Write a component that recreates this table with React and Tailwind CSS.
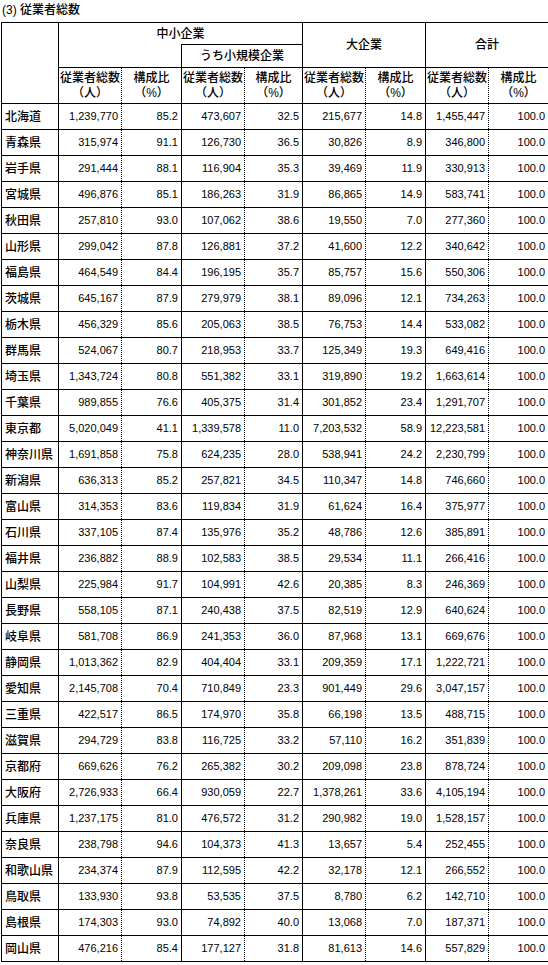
const rows = [
  ['北海道', '1,239,770', '85.2', '473,607', '32.5', '215,677', '14.8', '1,455,447', '100.0'],
  ['青森県', '315,974', '91.1', '126,730', '36.5', '30,826', '8.9', '346,800', '100.0'],
  ['岩手県', '291,444', '88.1', '116,904', '35.3', '39,469', '11.9', '330,913', '100.0'],
  ['宮城県', '496,876', '85.1', '186,263', '31.9', '86,865', '14.9', '583,741', '100.0'],
  ['秋田県', '257,810', '93.0', '107,062', '38.6', '19,550', '7.0', '277,360', '100.0'],
  ['山形県', '299,042', '87.8', '126,881', '37.2', '41,600', '12.2', '340,642', '100.0'],
  ['福島県', '464,549', '84.4', '196,195', '35.7', '85,757', '15.6', '550,306', '100.0'],
  ['茨城県', '645,167', '87.9', '279,979', '38.1', '89,096', '12.1', '734,263', '100.0'],
  ['栃木県', '456,329', '85.6', '205,063', '38.5', '76,753', '14.4', '533,082', '100.0'],
  ['群馬県', '524,067', '80.7', '218,953', '33.7', '125,349', '19.3', '649,416', '100.0'],
  ['埼玉県', '1,343,724', '80.8', '551,382', '33.1', '319,890', '19.2', '1,663,614', '100.0'],
  ['千葉県', '989,855', '76.6', '405,375', '31.4', '301,852', '23.4', '1,291,707', '100.0'],
  ['東京都', '5,020,049', '41.1', '1,339,578', '11.0', '7,203,532', '58.9', '12,223,581', '100.0'],
  ['神奈川県', '1,691,858', '75.8', '624,235', '28.0', '538,941', '24.2', '2,230,799', '100.0'],
  ['新潟県', '636,313', '85.2', '257,821', '34.5', '110,347', '14.8', '746,660', '100.0'],
  ['富山県', '314,353', '83.6', '119,834', '31.9', '61,624', '16.4', '375,977', '100.0'],
  ['石川県', '337,105', '87.4', '135,976', '35.2', '48,786', '12.6', '385,891', '100.0'],
  ['福井県', '236,882', '88.9', '102,583', '38.5', '29,534', '11.1', '266,416', '100.0'],
  ['山梨県', '225,984', '91.7', '104,991', '42.6', '20,385', '8.3', '246,369', '100.0'],
  ['長野県', '558,105', '87.1', '240,438', '37.5', '82,519', '12.9', '640,624', '100.0'],
  ['岐阜県', '581,708', '86.9', '241,353', '36.0', '87,968', '13.1', '669,676', '100.0'],
  ['静岡県', '1,013,362', '82.9', '404,404', '33.1', '209,359', '17.1', '1,222,721', '100.0'],
  ['愛知県', '2,145,708', '70.4', '710,849', '23.3', '901,449', '29.6', '3,047,157', '100.0'],
  ['三重県', '422,517', '86.5', '174,970', '35.8', '66,198', '13.5', '488,715', '100.0'],
  ['滋賀県', '294,729', '83.8', '116,725', '33.2', '57,110', '16.2', '351,839', '100.0'],
  ['京都府', '669,626', '76.2', '265,382', '30.2', '209,098', '23.8', '878,724', '100.0'],
  ['大阪府', '2,726,933', '66.4', '930,059', '22.7', '1,378,261', '33.6', '4,105,194', '100.0'],
  ['兵庫県', '1,237,175', '81.0', '476,572', '31.2', '290,982', '19.0', '1,528,157', '100.0'],
  ['奈良県', '238,798', '94.6', '104,373', '41.3', '13,657', '5.4', '252,455', '100.0'],
  ['和歌山県', '234,374', '87.9', '112,595', '42.2', '32,178', '12.1', '266,552', '100.0'],
  ['鳥取県', '133,930', '93.8', '53,535', '37.5', '8,780', '6.2', '142,710', '100.0'],
  ['島根県', '174,303', '93.0', '74,892', '40.0', '13,068', '7.0', '187,371', '100.0'],
  ['岡山県', '476,216', '85.4', '177,127', '31.8', '81,613', '14.6', '557,829', '100.0'],
];

const widths = [57, 63, 60, 63, 58, 63, 60, 63, 60];

// dotted right edge between count and ratio, solid after ratio
const dotted = 'border-y border-r border-black [border-right-style:dotted]';
const solid = 'border-y border-r border-black';

function SubHead() {
  return (
    <>
      <th className={`${dotted} font-medium leading-[15px]`}>従業者総数<br />（人）</th>
      <th className={`${solid} font-medium leading-[15px]`}>構成比<br />（%）</th>
    </>
  );
}

export default function App() {
  return (
    <div className="w-[548px] bg-white text-black font-['Liberation_Sans','Noto_Sans_CJK_JP',sans-serif]">
      <div className="h-[22px] pl-[2px] pt-[2px] text-[12px] leading-[16px] font-medium">(3) 従業者総数</div>

      <table className="ml-[1px] w-[546px] table-fixed border-collapse text-[11px]">
        <colgroup>
          {widths.map((w, i) => (
            <col key={i} style={{ width: w }} />
          ))}
        </colgroup>
        <thead className="text-[12px]">
          <tr className="h-[22px]">
            <th rowSpan={3} className="border border-black" />
            <th colSpan={4} className="border-t border-r border-black font-medium">中小企業</th>
            <th colSpan={2} rowSpan={2} className="border-t border-r border-black font-medium">大企業</th>
            <th colSpan={2} rowSpan={2} className="border-t border-r border-black font-medium">合計</th>
          </tr>
          <tr className="h-[23px]">
            <th colSpan={2} />
            <th colSpan={2} className="border-t border-l border-r border-black font-medium">うち小規模企業</th>
          </tr>
          <tr className="h-[36px]">
            <SubHead />
            <SubHead />
            <SubHead />
            <SubHead />
          </tr>
        </thead>
        <tbody>
          {rows.map(([name, ...vals]) => (
            <tr key={name} className="h-[26px]">
              <td className="border border-black pl-[3px] text-[12px] font-medium">{name}</td>
              {vals.map((v, i) => (
                <td key={i} className={`${i % 2 === 0 ? dotted : solid} pr-[3px] text-right`}>
                  {v}
                </td>
              ))}
            </tr>
          ))}
        </tbody>
      </table>
    </div>
  );
}
